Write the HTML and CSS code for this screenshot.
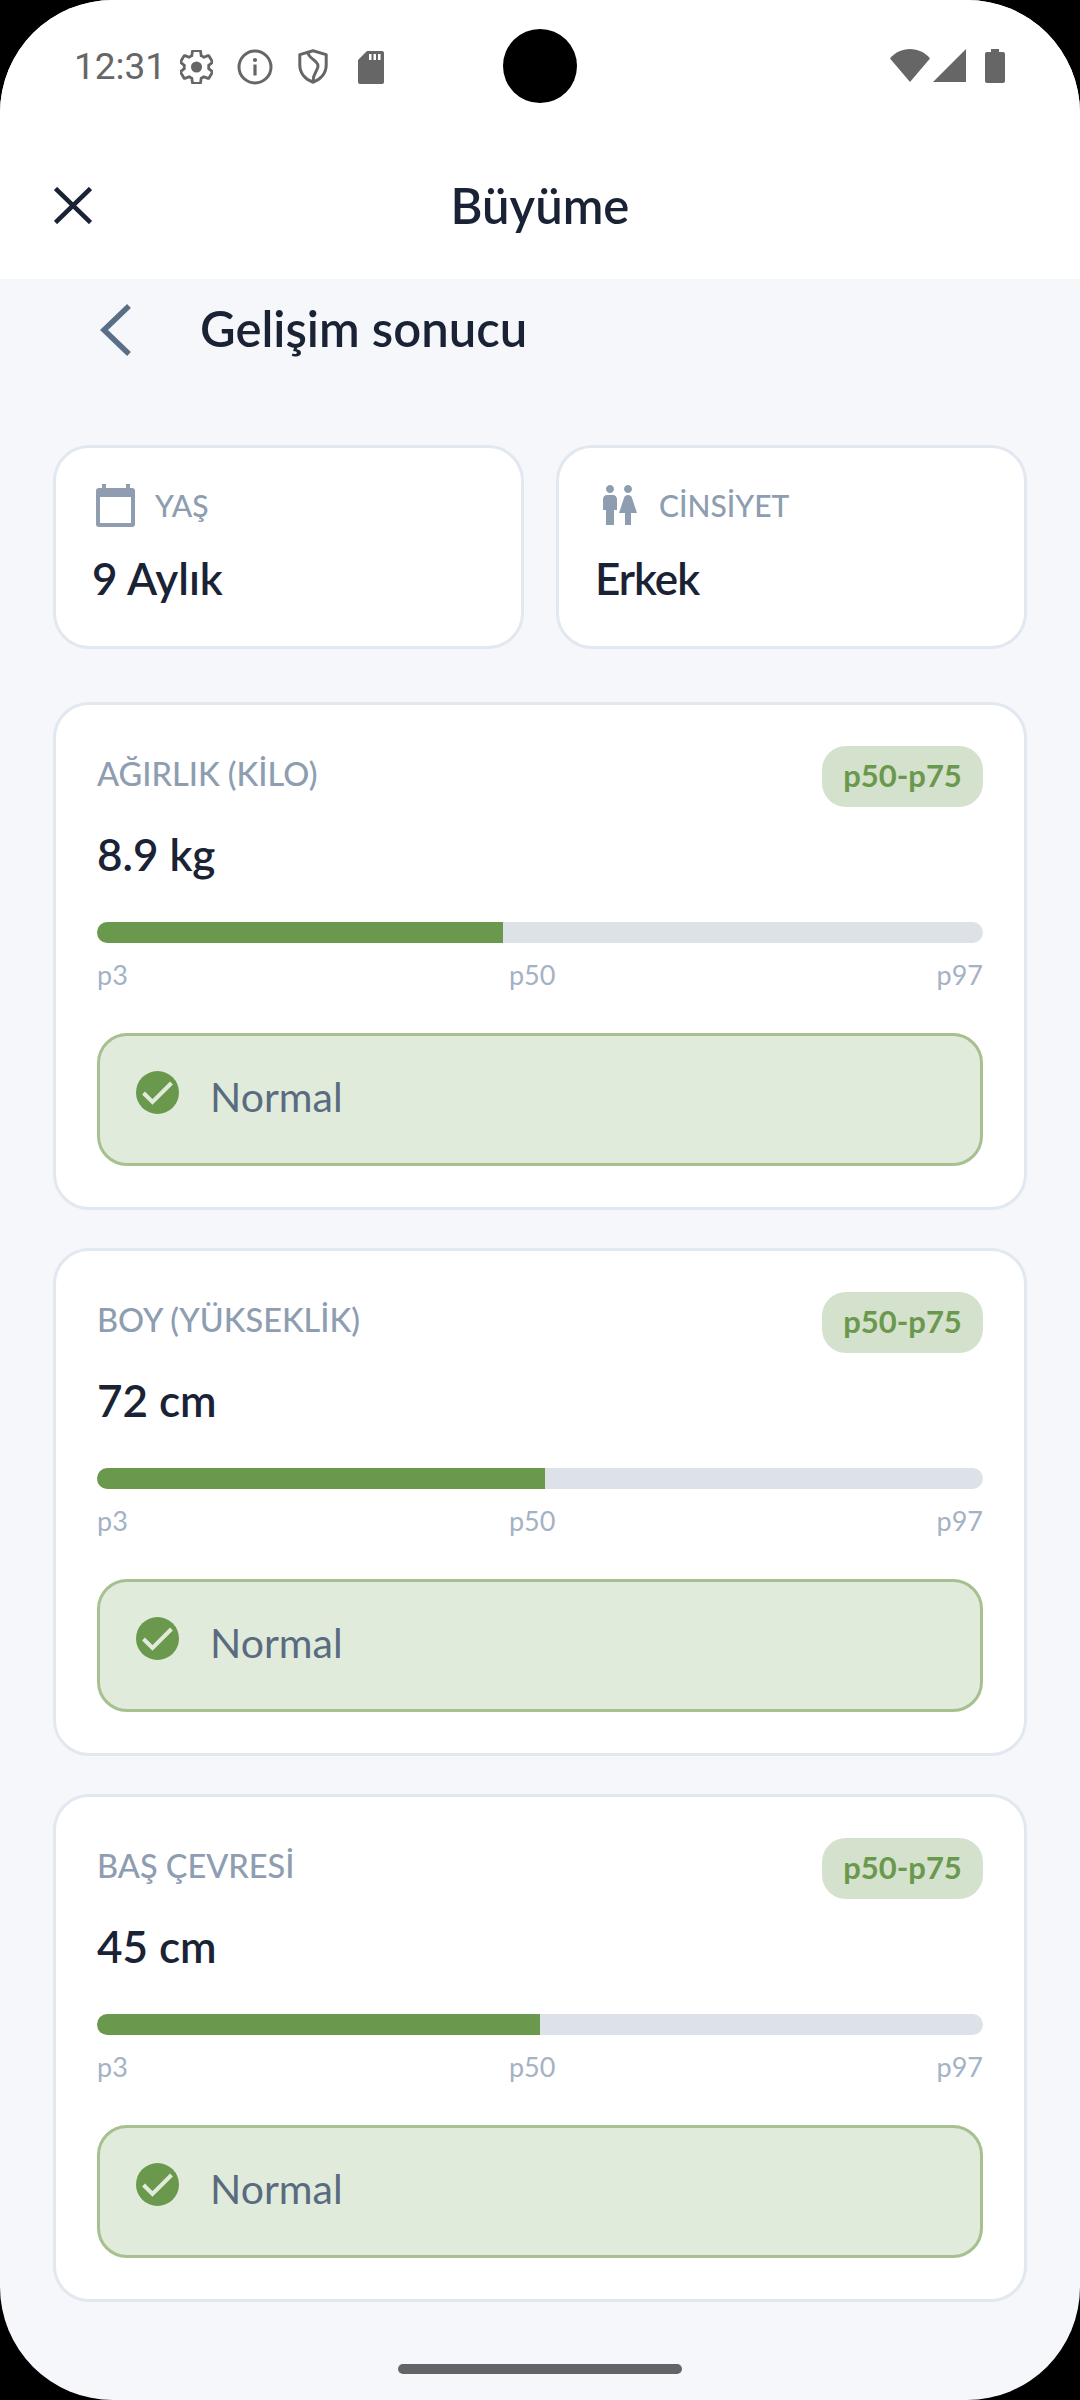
FILE: index.html
```html
<!DOCTYPE html>
<html lang="tr">
<head>
<meta charset="utf-8">
<title>Büyüme</title>
<link rel="stylesheet" href="styles.css">
</head>
<body>
<div class="screen">
  <div class="camera"></div>
  <header class="top">
    <div class="status">
      <div class="status-left">
        <span class="time">12:31</span>
        <svg class="si si-gear" viewBox="2 1.6 20 20.8"><path fill="none" stroke="#666" stroke-width="1.7" d="M19.43 12.98c.04-.32.07-.64.07-.98s-.03-.66-.07-.98l2.11-1.65c.19-.15.24-.42.12-.64l-2-3.46c-.12-.22-.39-.3-.61-.22l-2.49 1c-.52-.4-1.08-.73-1.69-.98l-.38-2.65C14.46 2.18 14.25 2 14 2h-4c-.25 0-.46.18-.49.42l-.38 2.65c-.61.25-1.17.59-1.69.98l-2.49-1c-.23-.09-.49 0-.61.22l-2 3.46c-.13.22-.07.49.12.64l2.11 1.65c-.04.32-.07.65-.07.98s.03.66.07.98l-2.11 1.65c-.19.15-.24.42-.12.64l2 3.46c.12.22.39.3.61.22l2.49-1c.52.4 1.08.73 1.69.98l.38 2.65c.03.24.24.42.49.42h4c.25 0 .46-.18.49-.42l.38-2.65c.61-.25 1.17-.59 1.69-.98l2.49 1c.23.09.49 0 .61-.22l2-3.46c.12-.22.07-.49-.12-.64l-2.11-1.65z"/><circle cx="12" cy="12" r="3.4" fill="#666"/></svg>
        <svg class="si si-info" viewBox="0 0 36 36"><circle cx="18" cy="18" r="16" fill="none" stroke="#666" stroke-width="3"/><circle cx="18" cy="11" r="2.1" fill="#666"/><rect x="16.4" y="15.5" width="3.2" height="11" fill="#666"/></svg>
        <svg class="si si-shield" viewBox="0 0 30 35"><path fill="none" stroke="#666" stroke-width="3" stroke-linejoin="round" d="M15 1.8 28.2 5.6V16c0 8-5.4 14.8-13.2 17.2C7.2 30.800 1.800 24 1.800 16V5.600z"/><path fill="none" stroke="#666" stroke-width="3" d="M10 3.500c.5 6 9 7.500 10 13 .7 4.500-5 7-5 16"/></svg>
        <svg class="si si-sd" viewBox="0 0 26 33"><path fill="#666" d="M9 0h15a2 2 0 0 1 2 2v29a2 2 0 0 1-2 2H2a2 2 0 0 1-2-2V9z"/><path fill="#fff" d="M11 3h2.500v6H11zM15.500 3H18v6h-2.500zM20 3h2.500v6H20z"/></svg>
      </div>
      <div class="status-right">
        <svg class="si si-wifi" viewBox="0 0 40 33"><path fill="#666" d="M0 9.500C5 3.500 12 0 20 0s15 3.500 20 9.500L20 33z"/></svg>
        <svg class="si si-signal" viewBox="0 0 33 33"><path fill="#666" d="M33 0v33H0z"/></svg>
        <svg class="si si-battery" viewBox="0 0 20 34"><path fill="#666" d="M6 0h8v3h4a2 2 0 0 1 2 2v27a2 2 0 0 1-2 2H2a2 2 0 0 1-2-2V5a2 2 0 0 1 2-2h4z"/></svg>
      </div>
    </div>
    <div class="appbar">
      <svg class="close" viewBox="0 0 38 37"><path fill="none" stroke="#1a2335" stroke-width="4.600" d="M1.500 1.500 36.500 35.500M36.500 1.500 1.500 35.500"/></svg>
      <h1 class="title">Büyüme</h1>
    </div>
  </header>
  <main class="content">
    <div class="subhead">
      <svg class="back" viewBox="0 0 31 52"><path fill="none" stroke="#5a6e85" stroke-width="5.500" d="M29 2 4 26l25 24"/></svg>
      <h2 class="subtitle">Gelişim sonucu</h2>
    </div>
    <section class="info-row">
      <div class="info-card">
        <div class="info-label">
          <svg class="cal" viewBox="0 0 39 43"><path fill="#8e9db0" d="M6 0h4v4h20V0h4v4h2a3 3 0 0 1 3 3v33a3 3 0 0 1-3 3H3a3 3 0 0 1-3-3V7a3 3 0 0 1 3-3h3zM4 13v26h31V13z"/></svg>
          <span class="label">YAŞ</span>
        </div>
        <div class="info-value">9 Aylık</div>
      </div>
      <div class="info-card info-card-alt">
        <div class="info-label">
          <svg class="wc" viewBox="4 2 17 20"><path fill="#8e9db0" d="M5.500 22v-7.500H4V9c0-1.100.9-2 2-2h3c1.100 0 2 .9 2 2v5.500H9.500V22h-4zM18 22v-6h3l-2.540-7.630C18.180 7.550 17.420 7 16.560 7h-.12c-.86 0-1.630.55-1.900 1.370L12 16h3v6h3zM7.500 6c1.110 0 2-.89 2-2s-.89-2-2-2-2 .89-2 2 .89 2 2 2zm9 0c1.110 0 2-.89 2-2s-.89-2-2-2-2 .89-2 2 .89 2 2 2z"/></svg>
          <span class="label">CİNSİYET</span>
        </div>
        <div class="info-value">Erkek</div>
      </div>
    </section>
    <section class="metric">
      <div class="metric-head"><span class="label metric-label">AĞIRLIK (KİLO)</span><span class="pill">p50-p75</span></div>
      <div class="metric-value">8.9 kg</div>
      <div class="bar"><div class="fill" style="width:45.800%"></div></div>
      <div class="scale"><span>p3</span><span>p50</span><span>p97</span></div>
      <div class="result">
        <svg class="check" viewBox="0 0 43 43"><circle cx="21.500" cy="21.500" r="21.500" fill="#6a994e"/><path fill="none" stroke="#e1ebdc" stroke-width="4" d="M7.500 22l9 9 19-19"/></svg>
        <span class="result-text">Normal</span>
      </div>
    </section>
    <section class="metric">
      <div class="metric-head"><span class="label metric-label">BOY (YÜKSEKLİK)</span><span class="pill">p50-p75</span></div>
      <div class="metric-value">72 cm</div>
      <div class="bar"><div class="fill" style="width:50.600%"></div></div>
      <div class="scale"><span>p3</span><span>p50</span><span>p97</span></div>
      <div class="result">
        <svg class="check" viewBox="0 0 43 43"><circle cx="21.500" cy="21.500" r="21.500" fill="#6a994e"/><path fill="none" stroke="#e1ebdc" stroke-width="4" d="M7.500 22l9 9 19-19"/></svg>
        <span class="result-text">Normal</span>
      </div>
    </section>
    <section class="metric">
      <div class="metric-head"><span class="label metric-label">BAŞ ÇEVRESİ</span><span class="pill">p50-p75</span></div>
      <div class="metric-value">45 cm</div>
      <div class="bar"><div class="fill" style="width:50%"></div></div>
      <div class="scale"><span>p3</span><span>p50</span><span>p97</span></div>
      <div class="result">
        <svg class="check" viewBox="0 0 43 43"><circle cx="21.500" cy="21.500" r="21.500" fill="#6a994e"/><path fill="none" stroke="#e1ebdc" stroke-width="4" d="M7.500 22l9 9 19-19"/></svg>
        <span class="result-text">Normal</span>
      </div>
    </section>
    <div class="home"></div>
  </main>
</div>
</body>
</html>
```
FILE: styles.css
```css
* { box-sizing: border-box; margin: 0; padding: 0; }
html, body { background: #000; }
body { width: 1080px; height: 2400px; overflow: hidden; font-family: "Lato", "Noto Sans", sans-serif; }
.screen { position: relative; width: 1080px; height: 2400px; border-radius: 113px; overflow: hidden; background: #f5f7fb; display: flex; flex-direction: column; }
.camera { position: absolute; left: 503px; top: 29px; width: 74px; height: 74px; border-radius: 50%; background: #000; }
.top { background: #fff; height: 279px; flex: none; }
.status { height: 132px; display: flex; justify-content: space-between; padding: 49px 75px 0 74px; }
.status-left { display: flex; align-items: flex-start; }
.status-right { display: flex; align-items: flex-start; }
.time { font-family: "Roboto", sans-serif; font-size: 37px; line-height: 35px; color: #666; width: 106px; }
.si { display: block; flex: none; }
.si-gear { width: 33px; height: 34px; margin-top: 1px; }
.si-info { width: 36px; height: 36px; margin: 0 0 0 24px; }
.si-shield { width: 30px; height: 35px; margin-left: 25px; }
.si-sd { width: 26px; height: 33px; margin: 2px 0 0 30px; }
.si-wifi { width: 40px; height: 33px; }
.si-signal { width: 33px; height: 33px; margin-left: 3px; }
.si-battery { width: 20px; height: 34px; margin-left: 19px; }
.appbar { position: relative; height: 147px; display: flex; align-items: center; justify-content: center; }
.close { position: absolute; left: 54px; top: 55px; width: 38px; height: 37px; }
.title { font-size: 49px; font-weight: 600; color: #1a2335; margin-top: -2px; }
.content { flex: 1; display: flex; flex-direction: column; padding: 0 53px; }
.subhead { height: 101px; display: flex; align-items: center; padding-left: 47px; gap: 69px; flex: none; }
.back { width: 31px; height: 52px; flex: none; }
.subtitle { font-size: 49px; font-weight: 600; color: #1a2335; margin-top: -4px; }
.info-row { display: grid; grid-template-columns: 471px 471px; gap: 32px; margin-top: 65px; }
.info-card { height: 204px; background: #fff; border: 3px solid #e2e8f0; border-radius: 36px; padding: 35px 36px; }
.info-label { display: flex; align-items: center; gap: 20px; height: 44px; }
.info-card-alt .info-label { gap: 22px; padding-left: 8px; }
.label { font-size: 30px; font-weight: 500; color: #8e9db0; }
.cal { width: 39px; height: 43px; flex: none; margin-left: 4px; }
.wc { width: 34px; height: 40px; flex: none; }
.info-value { font-size: 44px; font-weight: 600; color: #1a2335; line-height: 56px; margin-top: 23px; }
.info-card-alt .info-value { letter-spacing: -1px; }
.metric { height: 508px; background: #fff; border: 3px solid #e2e8f0; border-radius: 36px; padding: 41px; margin-top: 53px; flex: none; }
.metric + .metric { margin-top: 38px; }
.metric-head { display: flex; justify-content: space-between; align-items: flex-start; height: 61px; }
.metric-label { font-size: 32.500px; line-height: 56px; }
.pill { height: 61px; width: 161px; border-radius: 24px; background: #d4e1cc; color: #6a994e; font-size: 31px; font-weight: 700; display: flex; align-items: center; justify-content: center; padding-bottom: 3px; }
.metric-value { font-size: 44px; font-weight: 600; color: #1a2335; line-height: 56px; margin-top: 19px; }
.bar { height: 21px; border-radius: 11px; background: #dde1e8; overflow: hidden; margin-top: 40px; }
.fill { height: 100%; background: #6a994e; }
.scale { display: flex; justify-content: space-between; font-size: 27px; line-height: 36px; color: #a4b2c4; margin-top: 14px; }
.result { height: 133px; border: 3px solid #a6c18f; background: #e1ebdc; border-radius: 30px; margin-top: 40px; display: flex; align-items: flex-start; padding: 35px 0 0 36px; gap: 31px; }
.check { width: 43px; height: 43px; flex: none; }
.result-text { font-size: 41px; line-height: 50px; color: #5a6b80; margin-top: 1px; }
.home { width: 284px; height: 10px; border-radius: 5px; background: #636466; margin: 62px auto 0; flex: none; }
```
